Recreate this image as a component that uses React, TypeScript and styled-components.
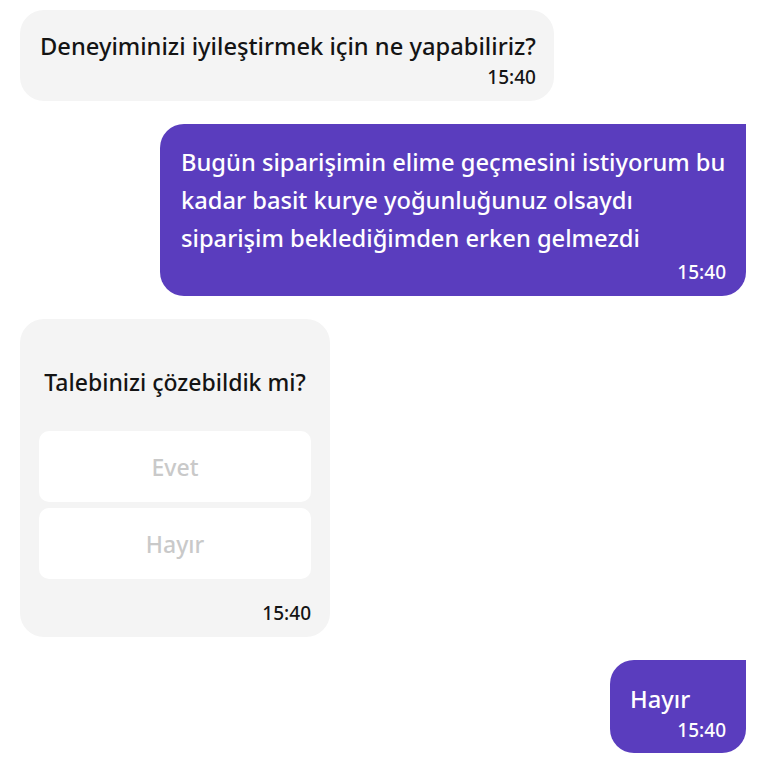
import React from "react";
import styled, { createGlobalStyle } from "styled-components";

const Global = createGlobalStyle`
  html, body { margin: 0; padding: 0; background: #ffffff; }
  body { font-family: "Noto Sans", "Open Sans", sans-serif; color: #141414; }
`;

const Chat = styled.div`
  display: flex;
  flex-direction: column;
  gap: 23px;
  padding: 10px 22px 0 20px;
`;

const Bubble = styled.div<{ $mine?: boolean }>`
  box-sizing: border-box;
  align-self: ${(p) => (p.$mine ? "flex-end" : "flex-start")};
  background: ${(p) => (p.$mine ? "#5a3dbe" : "#f4f4f4")};
  color: ${(p) => (p.$mine ? "#ffffff" : "#141414")};
  border-radius: ${(p) => (p.$mine ? "24px 0 24px 24px" : "24px")};
  display: flex;
  flex-direction: column;
`;

const Text = styled.div<{ $lh?: number }>`
  font-size: 23.7px;
  font-weight: 500;
  line-height: ${(p) => p.$lh ?? 32}px;
`;

const Time = styled.div`
  align-self: flex-end;
  font-size: 19px;
  font-weight: 500;
  line-height: 24px;
  margin-top: 3px;
`;

const Survey = styled(Bubble)`
  width: 310px;
  padding: 47px 19px 12px 19px;
`;

const Title = styled.div`
  text-align: center;
  font-size: 23px;
  font-weight: 500;
  line-height: 32px;
  margin-bottom: 33px;
`;

const Options = styled.div`
  display: flex;
  flex-direction: column;
  gap: 6px;
  margin-bottom: 19px;
`;

const Option = styled.button`
  height: 71px;
  border: none;
  border-radius: 10px;
  background: #ffffff;
  color: #c9c9c9;
  font-family: "Noto Sans", "Open Sans", sans-serif;
  font-size: 23px;
  font-weight: 500;
  padding: 0;
`;

export default function App() {
  return (
    <>
      <Global />
      <Chat>
        <Bubble style={{ padding: "20px 18px 12px 20px" }}>
          <Text>Deneyiminizi iyileştirmek için ne yapabiliriz?</Text>
          <Time>15:40</Time>
        </Bubble>
        <Bubble $mine style={{ width: 586, padding: "19px 20px 12px 21px" }}>
          <Text $lh={38}>
            Bugün siparişimin elime geçmesini istiyorum bu kadar basit kurye
            yoğunluğunuz olsaydı siparişim beklediğimden erken gelmezdi
          </Text>
          <Time>15:40</Time>
        </Bubble>
        <Survey>
          <Title>Talebinizi çözebildik mi?</Title>
          <Options>
            <Option>Evet</Option>
            <Option>Hayır</Option>
          </Options>
          <Time>15:40</Time>
        </Survey>
        <Bubble $mine style={{ minWidth: 136, padding: "23px 20px 11px 20px" }}>
          <Text>Hayır</Text>
          <Time>15:40</Time>
        </Bubble>
      </Chat>
    </>
  );
}
